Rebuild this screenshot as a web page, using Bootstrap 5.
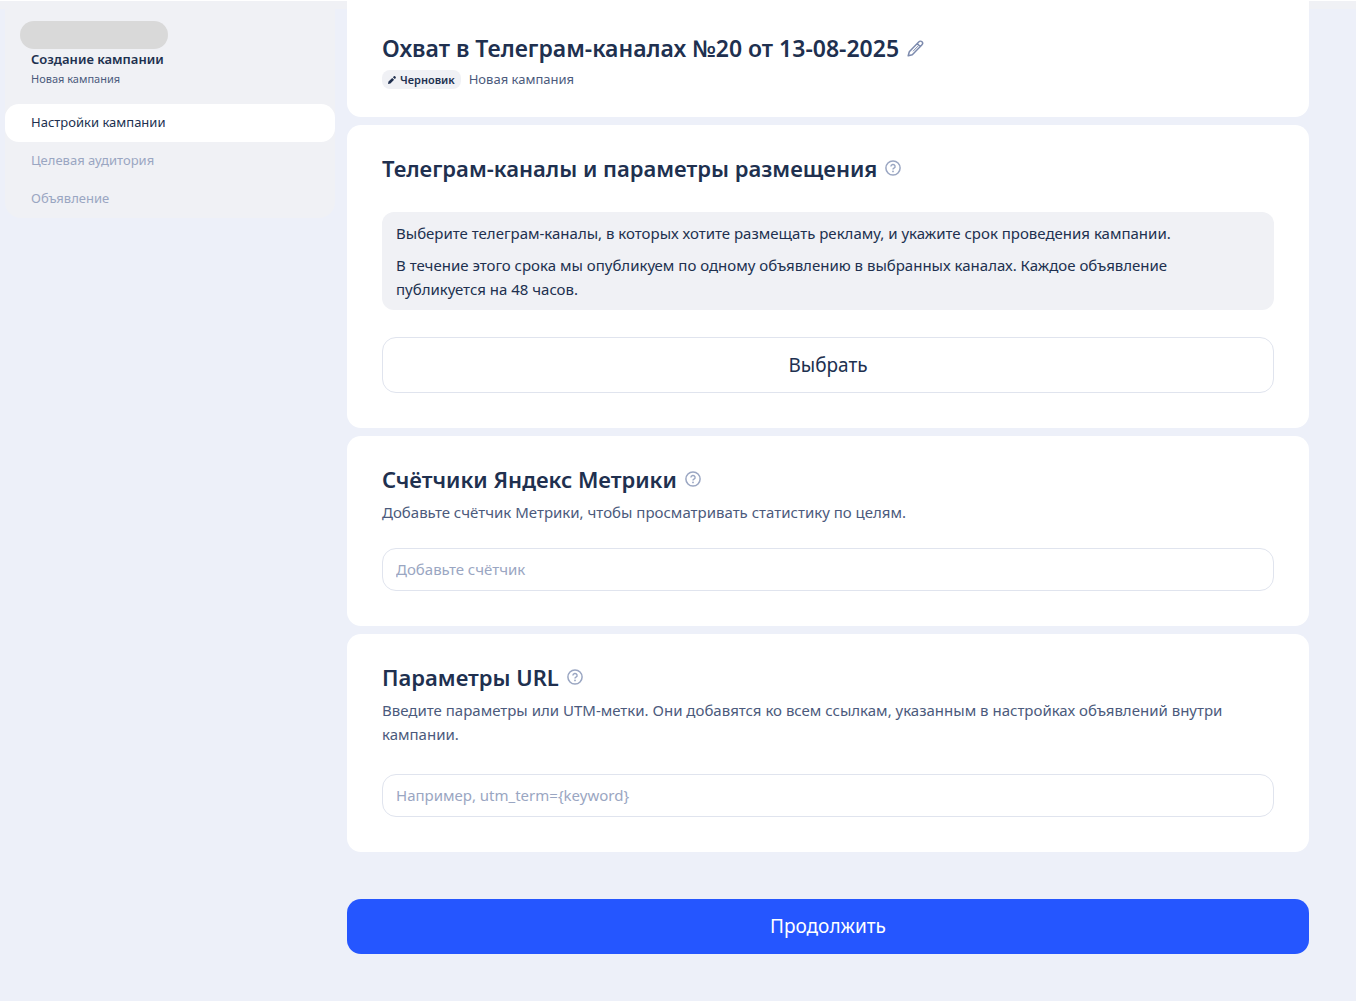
<!DOCTYPE html>
<html lang="ru">
<head>
<meta charset="utf-8">
<meta name="viewport" content="width=device-width, initial-scale=1">
<title>Создание кампании</title>
<link href="https://cdn.jsdelivr.net/npm/bootstrap@5.3.0/dist/css/bootstrap.min.css" rel="stylesheet">
<style>
:root { --ink: #20304f; --ink-soft: #4b5a7c; --muted: #9aa6c2; --surface: #f0f1f5; --page: #edf0f9; --line: #e0e4ee; --accent: #2556ff; }
body { background: var(--page); color: var(--ink); font-family: "Noto Sans", "Open Sans", sans-serif; font-size: 15px; line-height: 24px; border-top: 1px solid #fff; }
.shell { background: linear-gradient(var(--surface), var(--surface)) top / 100% 8px no-repeat; padding-left: 5px; padding-right: 47px; gap: 12px; }
.side { flex: 0 0 330px; background: var(--surface); border-radius: 0 0 16px 16px; }
.side-head { padding: 20px 15px 15px; }
.account { width: 148px; height: 28px; border-radius: 14px; background: #d9d9d9; }
.side-title { font-size: 13px; line-height: 20px; font-weight: 600; margin: 0 0 0 11px; }
.side-sub { font-size: 11px; line-height: 20px; color: var(--ink-soft); margin: 0 0 0 11px; }
.side .nav-link { font-size: 13px; line-height: 20px; padding: 8px 26px 10px; border-radius: 14px; color: var(--muted); }
.side .nav-link.active { background: #fff; color: var(--ink); }
.content-col { min-width: 0; }
.panel { background: #fff; border-radius: 14px; padding: 27px 35px 35px; }
.panel-top { border-radius: 0 0 14px 14px; padding: 31px 35px 28px; }
.panel-title { font-size: 22px; line-height: 32px; font-weight: 600; margin: 0; color: var(--ink); }
.page-title { font-size: 23px; }
.icon-btn { border: 0; background: none; padding: 0; line-height: 0; color: #7c8aad; }
.help { color: var(--muted); }
.state-row { margin-top: 6px; }
.state { background: var(--surface); border-radius: 8px; font-size: 11px; line-height: 19px; font-weight: 600; padding: 0 6px; gap: 4px; }
.meta-text { font-size: 13px; line-height: 19px; color: var(--ink-soft); }
.note { background: var(--surface); border-radius: 12px; padding: 9px 14px; margin-top: 28px; }
.note p + p { margin-top: 8px; }
.choose { height: 56px; margin-top: 27px; border: 1px solid var(--line); border-radius: 14px; font-size: 19px; color: var(--ink); background: #fff; }
.desc { color: var(--ink-soft); margin: 5px 0 24px; }
.desc-long { margin-bottom: 28px; }
.field { height: 43px; border: 1px solid var(--line); border-radius: 14px; padding: 0 13px 2px; font-size: 15px; color: var(--ink); }
.field::placeholder { color: var(--muted); }
.go { height: 55px; margin-top: 39px; border: 0; border-radius: 14px; background: var(--accent); color: #fff; font-size: 19px; }
</style>
<script src="https://cdn.jsdelivr.net/npm/bootstrap@5.3.0/dist/js/bootstrap.bundle.min.js" defer></script>
</head>
<body>
<svg class="d-none" aria-hidden="true">
  <symbol id="question" viewBox="0 0 16 16">
    <circle cx="8" cy="8" r="7.1" fill="none" stroke="currentColor" stroke-width="1.5"/>
    <path d="M5.9 6.5a2.1 2 0 1 1 3.1 1.7c-.7.4-1 .7-1 1.3" fill="none" stroke="currentColor" stroke-width="1.4"/>
    <circle cx="8" cy="11.4" r=".9" fill="currentColor"/>
  </symbol>
</svg>
<div class="shell d-flex align-items-start">
  <aside class="side">
    <div class="side-head">
      <div class="account"></div>
      <p class="side-title">Создание кампании</p>
      <p class="side-sub">Новая кампания</p>
    </div>
    <nav class="nav flex-column">
      <a class="nav-link active" href="#settings" aria-current="page">Настройки кампании</a>
      <a class="nav-link" href="#audience">Целевая аудитория</a>
      <a class="nav-link" href="#ad">Объявление</a>
    </nav>
  </aside>
  <main class="content-col flex-grow-1 d-flex flex-column gap-2">
    <header class="panel panel-top">
      <div class="d-flex align-items-center gap-2">
        <h1 class="panel-title page-title">Охват в Телеграм-каналах №20 от 13-08-2025</h1>
        <button class="icon-btn" type="button" aria-label="Переименовать">
          <svg width="17" height="17" viewBox="0 0 17 17" fill="none" stroke="currentColor" stroke-width="1.5" stroke-linejoin="round"><path d="M1.2 15.8l1.1-4.1 9.4-9.7c1-1 2.4-1.100 3.300-.2s.8 2.200-.200 3.200l-9.500 9.700zM10.200 3.600l3.200 3.100"/><path d="M11 6.100l-5 5.200" stroke-width="1"/></svg>
        </button>
      </div>
      <div class="state-row d-flex align-items-center gap-2">
        <span class="state d-inline-flex align-items-center"><svg width="8" height="8" viewBox="0 0 8 8" fill="currentColor"><path d="M0 8l.5-2.400L4.200 1.900l1.900 1.900L2.400 7.500zM4.900 1.200L5.700.4c1-1 2.900.9 1.900 1.900L6.800 3.100z"/></svg>Черновик</span>
        <span class="meta-text">Новая кампания</span>
      </div>
    </header>
    <section class="panel" id="settings">
      <div class="d-flex align-items-center gap-2">
        <h2 class="panel-title">Телеграм-каналы и параметры размещения</h2>
        <button class="icon-btn help" type="button" aria-label="Справка"><svg width="16" height="16"><use href="#question"/></svg></button>
      </div>
      <div class="note">
        <p class="mb-0">Выберите телеграм-каналы, в которых хотите размещать рекламу, и укажите срок проведения кампании.</p>
        <p class="mb-0">В течение этого срока мы опубликуем по одному объявлению в выбранных каналах. Каждое объявление публикуется на 48 часов.</p>
      </div>
      <button class="btn choose w-100" type="button">Выбрать</button>
    </section>
    <section class="panel">
      <div class="d-flex align-items-center gap-2">
        <h2 class="panel-title"><label for="counter">Счётчики Яндекс Метрики</label></h2>
        <button class="icon-btn help" type="button" aria-label="Справка"><svg width="16" height="16"><use href="#question"/></svg></button>
      </div>
      <p class="desc">Добавьте счётчик Метрики, чтобы просматривать статистику по целям.</p>
      <input class="form-control field" id="counter" type="text" placeholder="Добавьте счётчик">
    </section>
    <section class="panel">
      <div class="d-flex align-items-center gap-2">
        <h2 class="panel-title"><label for="params">Параметры URL</label></h2>
        <button class="icon-btn help" type="button" aria-label="Справка"><svg width="16" height="16"><use href="#question"/></svg></button>
      </div>
      <p class="desc desc-long">Введите параметры или UTM-метки. Они добавятся ко всем ссылкам, указанным в настройках объявлений внутри кампании.</p>
      <input class="form-control field" id="params" type="text" placeholder="Например, utm_term={keyword}">
    </section>
    <button class="btn go w-100" type="submit">Продолжить</button>
  </main>
</div>
</body>
</html>
